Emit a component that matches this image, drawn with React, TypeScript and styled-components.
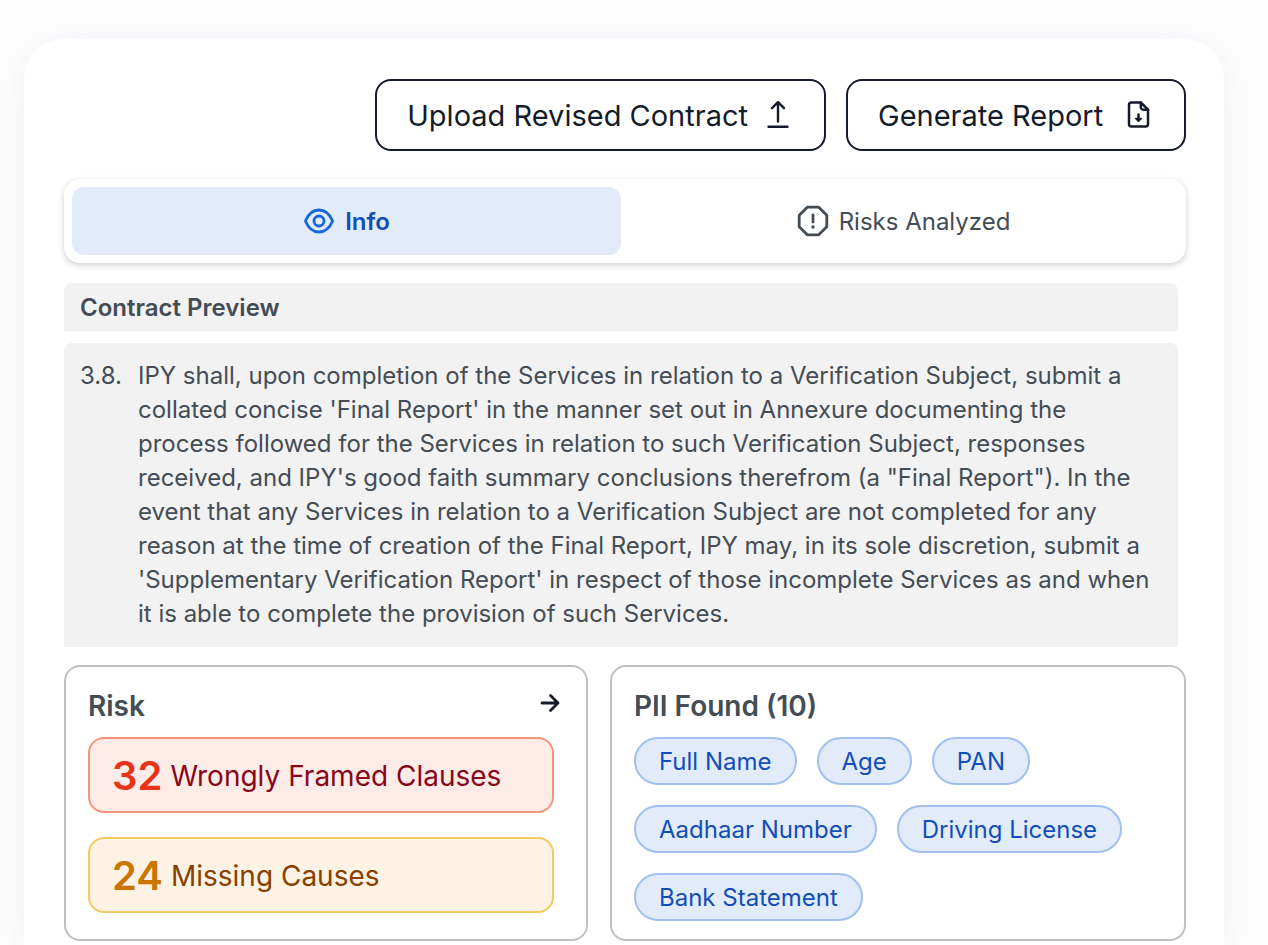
import React, { useState } from "react";
import styled, { createGlobalStyle } from "styled-components";

const GlobalStyle = createGlobalStyle`
  *, *::before, *::after { box-sizing: border-box; }
  body {
    margin: 0;
    background: #fefefe;
    color: #444c55;
    font-family: Inter, "Liberation Sans", sans-serif;
    font-size: 24px;
    line-height: 34px;
  }
  h2, p { margin: 0; }
  button { font: inherit; cursor: pointer; }
`;

const Page = styled.div`
  display: flex;
  min-height: 100vh;
  padding: 39px 44px 0 24px;
`;

const Panel = styled.main`
  flex: 1;
  min-width: 0;
  padding: 40px 38px 5px 40px;
  border-radius: 40px 40px 0 0;
  background: #fff;
  box-shadow: 0 8px 40px rgba(40, 80, 130, 0.09);
`;

const Actions = styled.div`
  display: flex;
  justify-content: flex-end;
  gap: 20px;
  margin-bottom: 28px;
`;

const ActionButton = styled.button`
  display: flex;
  align-items: center;
  justify-content: space-between;
  gap: 16px;
  min-width: 340px;
  height: 72px;
  padding: 0 30px;
  border: 2px solid #141b2b;
  border-radius: 16px;
  background: #fff;
  color: #141b2b;
  font-size: 29px;

  span { padding-top: 2px; }
`;

const Tabs = styled.div`
  display: grid;
  grid-template-columns: 1fr 1fr;
  gap: 8px;
  margin-bottom: 20px;
  padding: 8px;
  border-radius: 16px;
  background: #fff;
  box-shadow: 0 2px 6px rgba(0, 0, 0, 0.2);
`;

const Tab = styled.button<{ $active: boolean }>`
  display: flex;
  align-items: center;
  justify-content: center;
  gap: 10px;
  height: 68px;
  padding: 0;
  border: 0;
  border-radius: 12px;
  background: ${(p) => (p.$active ? "#e2ebfa" : "transparent")};
  color: ${(p) => (p.$active ? "#124eb8" : "#444c55")};
  font-weight: ${(p) => (p.$active ? 600 : 400)};

  span { padding-top: 2px; }
`;

const Preview = styled.section`
  display: grid;
  gap: 12px;
  margin: 0 8px 18px 0;
`;

const PreviewTitle = styled.h2`
  padding: 8px 16px 6px;
  border-radius: 8px 8px 0 0;
  background: #f2f2f2;
  font-size: 24px;
  font-weight: 600;
`;

const Clause = styled.div`
  display: grid;
  grid-template-columns: 58px 1fr;
  padding: 16px;
  border-radius: 8px 8px 0 0;
  background: #f2f2f2;
`;

const Cards = styled.div`
  display: grid;
  grid-template-columns: 524fr 576fr;
  gap: 22px;
`;

const Card = styled.section<{ $inset?: boolean }>`
  min-width: 0;
  padding: 22px ${(p) => (p.$inset ? 32 : 22)}px 18px 22px;
  border: 2px solid #bdc1c5;
  border-radius: 16px;
  background: #fff;
`;

const CardHeader = styled.header`
  display: flex;
  align-items: flex-start;
  justify-content: space-between;
  height: 48px;
`;

const CardTitle = styled.h2`
  font-size: 28px;
  font-weight: 600;
`;

const IconButton = styled.button`
  display: flex;
  margin-right: -8px;
  padding: 2px 0;
  border: 0;
  background: none;
  color: #141b2b;
`;

const RiskList = styled.div`
  display: grid;
  gap: 24px;
`;

const tones = {
  danger: { fill: "#fdebe8", edge: "#f4957a", count: "#e63319", label: "#870718" },
  warning: { fill: "#fdf3e5", edge: "#f8c860", count: "#cc7400", label: "#893f00" },
};

const RiskRow = styled.div<{ $tone: keyof typeof tones }>`
  display: flex;
  align-items: center;
  gap: 8px;
  height: 76px;
  padding: 2px 22px 0;
  border: 2px solid ${(p) => tones[p.$tone].edge};
  border-radius: 16px;
  background: ${(p) => tones[p.$tone].fill};
  color: ${(p) => tones[p.$tone].label};
  font-size: 28px;
  white-space: nowrap;

  strong {
    color: ${(p) => tones[p.$tone].count};
    font-size: 40px;
    font-weight: 600;
  }
`;

const Chips = styled.ul`
  display: flex;
  flex-wrap: wrap;
  gap: 20px;
  margin: 0;
  padding: 0;
  list-style: none;
`;

const Chip = styled.li`
  padding: 6px 23px 4px;
  border: 2px solid #a0c0ef;
  border-radius: 24px;
  background: #e2ebfa;
  color: #124eb8;
`;

const UploadIcon = () => (
  <svg width="30" height="32" viewBox="0 0 30 32" fill="none" stroke="currentColor" strokeWidth="2.4" strokeLinecap="round" strokeLinejoin="round" aria-hidden="true">
    <path d="M14 22.500V4M8 9.200L14 3.200L20 9.200M4.500 27.700H23.500" />
  </svg>
);

const ReportIcon = () => (
  <svg width="30" height="32" viewBox="0 0 30 32" fill="none" stroke="currentColor" strokeWidth="2.500" strokeLinecap="round" strokeLinejoin="round" aria-hidden="true">
    <path d="M16.800 3.500H7.500A2.500 2.500 0 0 0 5 6v19a2.500 2.500 0 0 0 2.500 2.500h14A2.500 2.500 0 0 0 24 25V10.700Z" />
    <path d="M16.800 3.500v4.700a2.500 2.500 0 0 0 2.500 2.500H24M14.500 15.500v6" />
    <path d="M11.700 19.500h5.600L14.500 22.300Z" fill="currentColor" strokeWidth="1.500" />
  </svg>
);

const EyeIcon = () => (
  <svg width="32" height="32" viewBox="0 0 32 32" fill="none" stroke="#1767dc" strokeWidth="2.800" strokeLinejoin="round" aria-hidden="true">
    <path d="M2.400 16C5.500 8.500 10.500 5 16 5s10.500 3.500 13.600 11C26.500 23.500 21.500 27 16 27S5.500 23.500 2.400 16Z" />
    <circle cx="16" cy="16" r="5" />
  </svg>
);

const AlertIcon = () => (
  <svg width="32" height="32" viewBox="0 0 32 32" fill="none" stroke="currentColor" strokeWidth="2.800" strokeLinejoin="round" aria-hidden="true">
    <path d="M10.300 2.200H21.700L29.800 10.300V21.700L21.700 29.800H10.300L2.200 21.700V10.300Z" />
    <path d="M16 10v7" strokeLinecap="round" />
    <circle cx="16" cy="22" r="1.700" fill="currentColor" stroke="none" />
  </svg>
);

const ArrowIcon = () => (
  <svg width="24" height="24" viewBox="0 0 24 24" fill="none" stroke="currentColor" strokeWidth="2.800" strokeLinecap="round" strokeLinejoin="round" aria-hidden="true">
    <path d="M4 12h16M12.500 4.500L20 12L12.500 19.500" />
  </svg>
);

const tabs = [
  { id: "info", label: "Info", icon: <EyeIcon /> },
  { id: "risks", label: "Risks Analyzed", icon: <AlertIcon /> },
];

const piiTypes = ["Full Name", "Age", "PAN", "Aadhaar Number", "Driving License", "Bank Statement"];

export default function App() {
  const [activeTab, setActiveTab] = useState("info");

  return (
    <>
      <GlobalStyle />
      <Page>
        <Panel>
          <Actions>
            <ActionButton type="button">
              <span>Upload Revised Contract</span>
              <UploadIcon />
            </ActionButton>
            <ActionButton type="button">
              <span>Generate Report</span>
              <ReportIcon />
            </ActionButton>
          </Actions>
          <Tabs role="tablist">
            {tabs.map((tab) => (
              <Tab
                key={tab.id}
                type="button"
                role="tab"
                aria-selected={activeTab === tab.id}
                $active={activeTab === tab.id}
                onClick={() => setActiveTab(tab.id)}
              >
                {tab.icon}
                <span>{tab.label}</span>
              </Tab>
            ))}
          </Tabs>
          <Preview>
            <PreviewTitle>Contract Preview</PreviewTitle>
            <Clause>
              <span>3.8.</span>
              <p>
                IPY shall, upon completion of the Services in relation to a Verification Subject, submit a
                collated concise 'Final Report' in the manner set out in Annexure documenting the process
                followed for the Services in relation to such Verification Subject, responses received, and
                IPY's good faith summary conclusions therefrom (a "Final Report"). In the event that any
                Services in relation to a Verification Subject are not completed for any reason at the time of
                creation of the Final Report, IPY may, in its sole discretion, submit a 'Supplementary
                Verification Report' in respect of those incomplete Services as and when it is able to
                complete the provision of such Services.
              </p>
            </Clause>
          </Preview>
          <Cards>
            <Card $inset>
              <CardHeader>
                <CardTitle>Risk</CardTitle>
                <IconButton type="button" aria-label="View risks">
                  <ArrowIcon />
                </IconButton>
              </CardHeader>
              <RiskList>
                <RiskRow $tone="danger">
                  <strong>32</strong>
                  Wrongly Framed Clauses
                </RiskRow>
                <RiskRow $tone="warning">
                  <strong>24</strong>
                  Missing Causes
                </RiskRow>
              </RiskList>
            </Card>
            <Card>
              <CardHeader>
                <CardTitle>PII Found (10)</CardTitle>
              </CardHeader>
              <Chips>
                {piiTypes.map((type) => (
                  <Chip key={type}>{type}</Chip>
                ))}
              </Chips>
            </Card>
          </Cards>
        </Panel>
      </Page>
    </>
  );
}
